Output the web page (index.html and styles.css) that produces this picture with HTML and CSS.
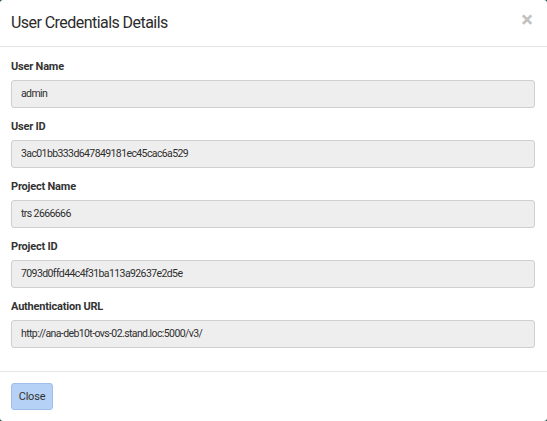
FILE: index.html
```html
<!DOCTYPE html>
<html>
<head>
<meta charset="utf-8">
<link rel="stylesheet" href="styles.css">
</head>
<body>
<div class="modal">
  <div class="modal-header">
    <h3 class="modal-title">User Credentials Details</h3>
    <span class="close">×</span>
  </div>
  <div class="modal-body">
    <div class="group">
      <label class="label">User Name</label>
      <div class="field">admin</div>
    </div>
    <div class="group">
      <label class="label">User ID</label>
      <div class="field">3ac01bb333d647849181ec45cac6a529</div>
    </div>
    <div class="group">
      <label class="label">Project Name</label>
      <div class="field">trs 2666666</div>
    </div>
    <div class="group">
      <label class="label">Project ID</label>
      <div class="field">7093d0ffd44c4f31ba113a92637e2d5e</div>
    </div>
    <div class="group">
      <label class="label">Authentication URL</label>
      <div class="field">http://ana-deb10t-ovs-02.stand.loc:5000/v3/</div>
    </div>
  </div>
  <div class="modal-footer">
    <button class="btn">Close</button>
  </div>
</div>
</body>
</html>
```
FILE: styles.css
```css
html, body {
  margin: 0;
  padding: 0;
  background: #17473e;
}
body {
  font-family: Roboto, "Liberation Sans", sans-serif;
  color: #333;
}
.modal {
  width: 547px;
  height: 421px;
  background: #fff;
  border-radius: 3px;
  box-sizing: border-box;
  display: flex;
  flex-direction: column;
}
.modal-header {
  height: 46px;
  box-sizing: content-box;
  border-bottom: 1px solid #e5e5e5;
  padding: 0 14px 0 11px;
  display: flex;
  align-items: center;
  justify-content: space-between;
}
.modal-title {
  margin: 0;
  font-size: 16px;
  font-weight: 400;
  letter-spacing: -0.55px;
  color: #2b2b2b;
  line-height: 24px;
}
.close {
  font-size: 22px;
  font-weight: 700;
  color: #c2c2c2;
  line-height: 20px;
  margin-top: -6px;
}
.modal-body {
  padding: 11px 12px 13px 11px;
}
.group {
  margin-bottom: 10px;
}
.label {
  display: block;
  font-size: 11px;
  font-weight: 700;
  line-height: 17px;
  margin-bottom: 5px;
  letter-spacing: -0.2px;
}
.field {
  height: 28px;
  box-sizing: border-box;
  border: 1px solid #cfcfcf;
  border-radius: 3px;
  background: #eee;
  padding: 0 9px;
  font-size: 10.5px;
  letter-spacing: -0.6px;
  line-height: 26px;
  color: #2e2e2e;
}
.modal-footer {
  border-top: 1px solid #e5e5e5;
  padding: 11px 11px 0;
}
.btn {
  display: block;
  width: 42px;
  height: 27px;
  padding: 0;
  border: 1px solid #9fbfea;
  border-radius: 3px;
  background: #b6d1f6;
  color: #333;
  font-family: inherit;
  font-size: 11px;
  letter-spacing: -0.2px;
}
```
